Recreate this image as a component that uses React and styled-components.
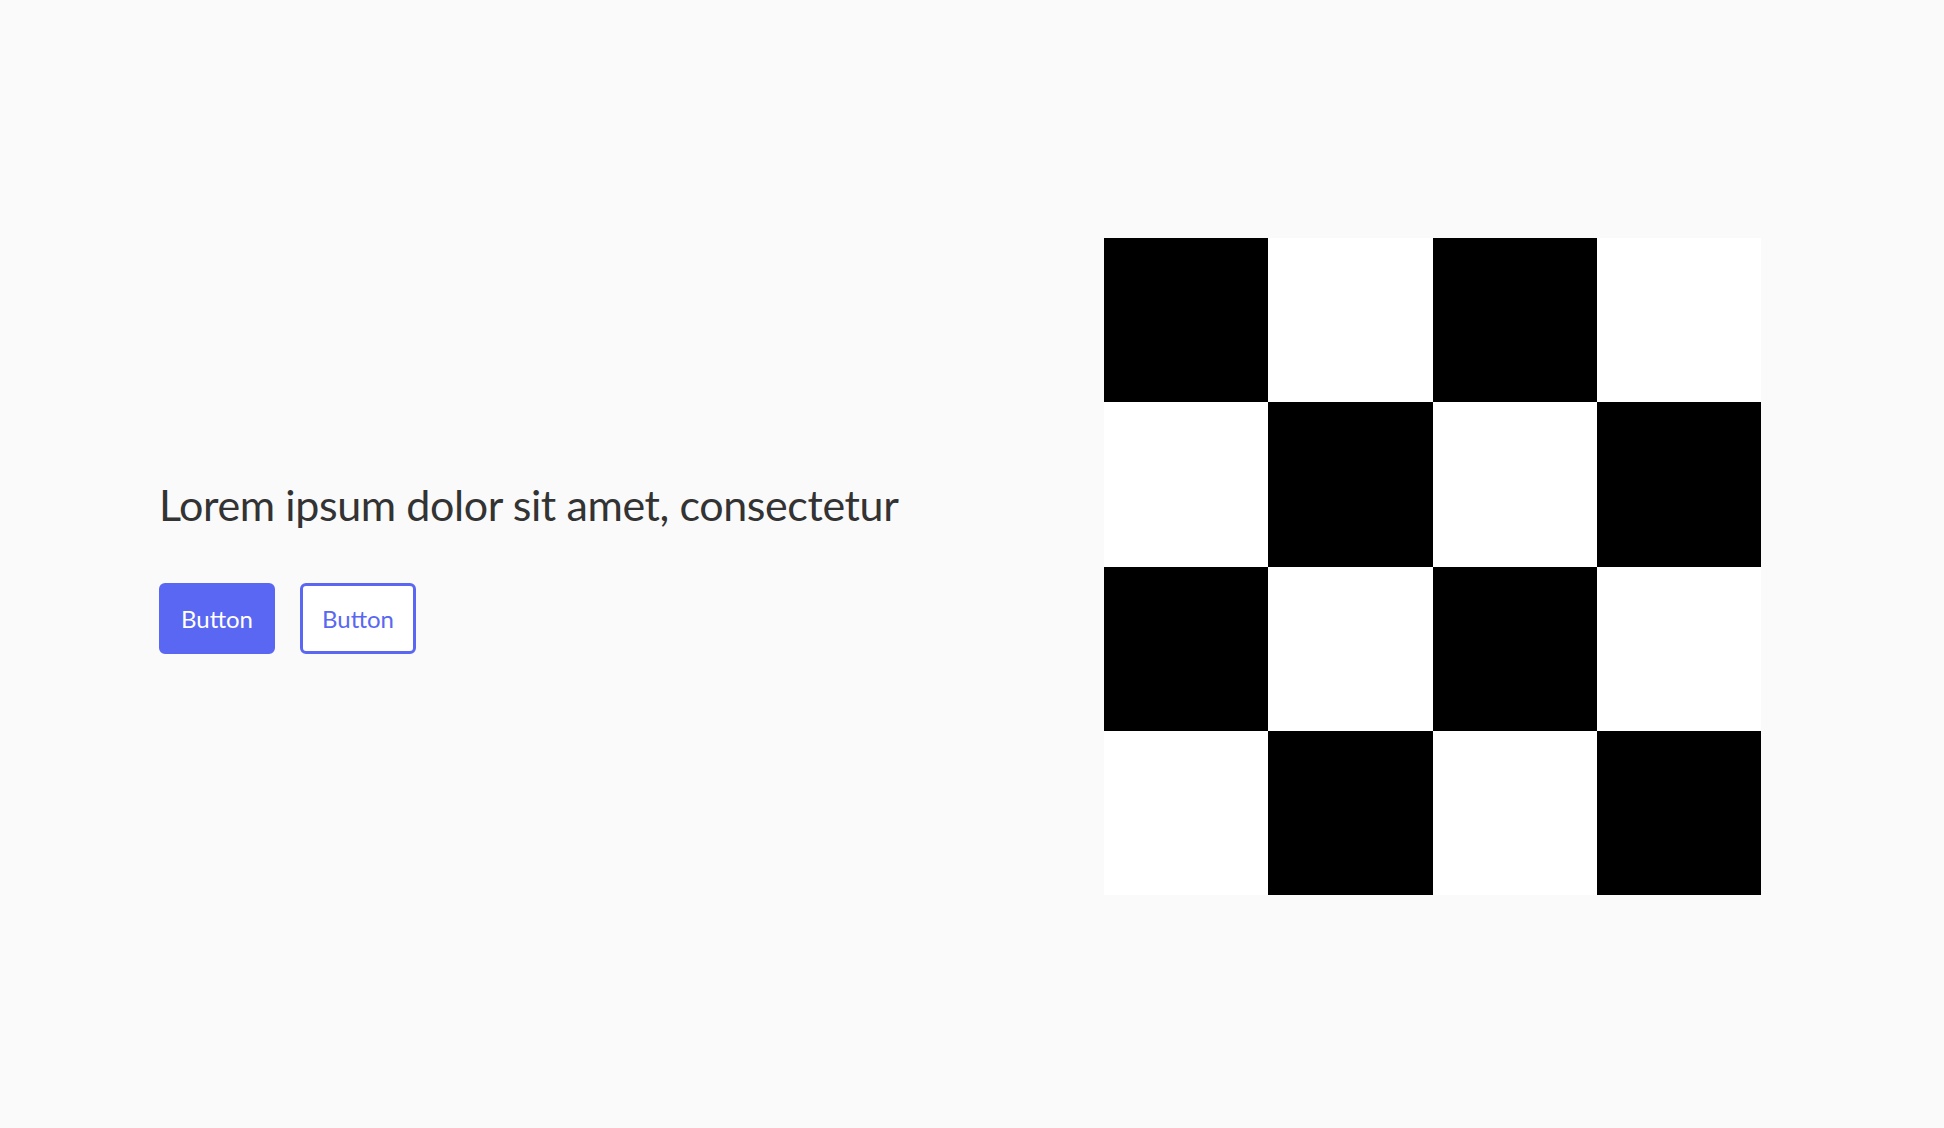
import React from 'react'
import styled, { createGlobalStyle } from 'styled-components'

const GlobalStyle = createGlobalStyle`
    html, body {
        margin: 0;
        padding: 0;
        background: #fafafa;
    }
    * {
        box-sizing: border-box;
    }
`

const Section = styled.section`
    width: 100%;
    height: 1128px;
    display: flex;
    align-items: center;
    justify-content: space-between;
    padding: 5px 183px 0 159px;
    font-family: Lato, "Open Sans", sans-serif;
`

const Content = styled.div`
    display: flex;
    flex-direction: column;
    align-items: flex-start;
`

const Title = styled.h1`
    margin: 0 0 52px;
    font-size: 43px;
    font-weight: 400;
    line-height: 52px;
    color: #333333;
    letter-spacing: -0.4px;
`

const Buttons = styled.div`
    display: flex;
    gap: 25px;
`

const Button = styled.button`
    width: 116px;
    height: 71px;
    border-radius: 6px;
    font-family: inherit;
    font-size: 24px;
    cursor: pointer;
    border: 3px solid #5a67f2;
    background: ${p => (p.outline ? '#ffffff' : '#5a67f2')};
    color: ${p => (p.outline ? '#5a67f2' : '#ffffff')};
`

const Board = styled.div`
    width: 657px;
    height: 657px;
    display: grid;
    grid-template-columns: repeat(4, 1fr);
    grid-template-rows: repeat(4, 1fr);
`

const Cell = styled.div`
    background: ${p => (p.dark ? '#000000' : '#ffffff')};
`

const App = () => {
    const cells = Array.from({ length: 16 }, (_, i) => {
        const row = Math.floor(i / 4)
        const col = i % 4
        return <Cell key={i} dark={(row + col) % 2 === 0} />
    })
    return (
        <>
            <GlobalStyle />
            <Section>
                <Content>
                    <Title>Lorem ipsum dolor sit amet, consectetur</Title>
                    <Buttons>
                        <Button>Button</Button>
                        <Button outline>Button</Button>
                    </Buttons>
                </Content>
                <Board>{cells}</Board>
            </Section>
        </>
    )
}

export default App
